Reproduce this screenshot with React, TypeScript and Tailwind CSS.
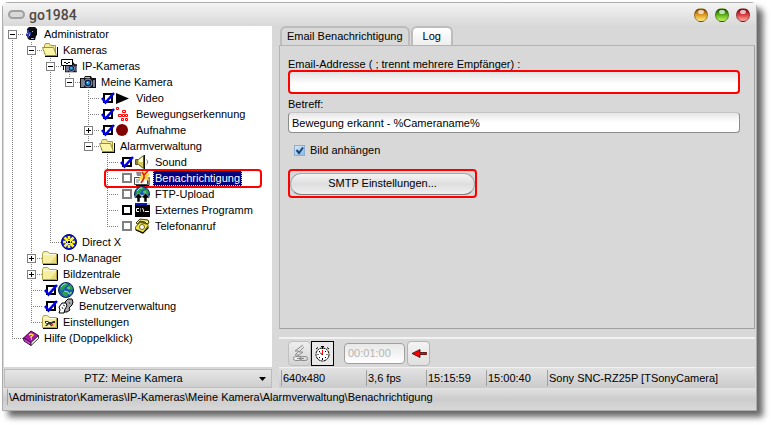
import { useState, type ReactNode } from "react";
import clsx from "clsx";

type Node = {
  label: string;
  icon: keyof typeof icons;
  check?: "on" | "off" | "dim";
  open?: boolean;
  closed?: boolean;
  selected?: boolean;
  children?: Node[];
};

const camera = (
  <>
    <path d="M0 4h4l1-2h6l1 2h4v10H0z" fill="#111" />
    <path d="M1 5h3v8H1zM13 6h2v7h-2z" fill="#7b7f96" />
    <path d="M5 3h5v1H5z" fill="#b9bccb" />
    <circle cx="8" cy="9" r="4.4" fill="#9aa0b8" />
    <circle cx="8" cy="9" r="3.4" fill="#10204c" />
    <circle cx="8" cy="9" r="2" fill="#1e9ad6" />
    <path d="M7 8h1v1H7z" fill="#fff" />
  </>
);

const folder = (
  <>
    <path d="M1 14.500h14.500V4" fill="none" stroke="#000" />
    <path d="M.5 13.500V3.500l1-2h4l2 2h7v10z" fill="#f7efa0" stroke="#b0a448" />
    <path d="M1.500 4.500h12" stroke="#fffde0" />
    <path d="M8 13h6V6z" fill="#e6d87c" />
  </>
);

const openFolder = (
  <>
    <path d="M2.500 12V3.500l1-2h4l1 2h5V12" fill="#f3ea98" stroke="#a89a3c" />
    <path d="M3.500 13.500L.5 5.500h11l3 8z" fill="#fbf5a8" stroke="#9c8f38" />
    <path d="M15.500 14V5M3 14.500h13" stroke="#000" />
  </>
);

const globe = (
  <>
    <circle cx="8" cy="8" r="7.500" fill="#1c5cb0" stroke="#0a2450" />
    <path d="M2 6l3-4 4-1 1 2-3 2-1 2-3 2zM10 4l3-1 2 4-2 1-3-1zM4 10l5-1 2 2-3 4-3-2z" fill="#2ca048" />
    <path d="M3 5l3-3 2 0M9 6l3 0M6 9l4 1 1 2" fill="none" stroke="#8fe0f0" />
    <path d="M12 10l2 0-1 2-2 1z" fill="#7fd070" />
  </>
);

const icons = {
  head: (
    <>
      <path d="M6 1h6l2 2v6l-1 1-1 4H7l-2-1-1-3-1-1 1-1V3z" fill="#0a0a10" />
      <path d="M4 4h2v2h2v3H6v3H5l-1-2H3V8l1-1z" fill="#2c3c98" />
      <path d="M4 7h1v1H4zM6 8h1v2H6zM9 5h1v1H9zM8 12h3v1H8z" fill="#a0b0e8" />
    </>
  ),
  openFolder,
  folder,
  ipCamera: (
    <>
      <g transform="translate(4 3) scale(.8)">{camera}</g>
      <path d="M.5 1.500h11v6H.5z" fill="#fff" stroke="#000" />
      <path d="M1 1h11v1H1zM3 4h2v1H3zM5 5h2v1H5zM7 4h2v1H7zM2 8h1v4H2z" fill="#000" />
    </>
  ),
  camera,
  play: <path d="M1 3l13 5.500L1 14z" fill="#000" />,
  motion: (
    <g fill="#fff" stroke="#f00">
      <path d="M1.500 1.500h2v2h-2zM7.500 4.500h3v2h-3zM3.500 8.500h3v2h-3zM7.500 8.500h2v2h-2zM10.500 8.500h2v2h-2zM6.500 12.500h2v2h-2zM10.500 12.500h2v2h-2z" />
    </g>
  ),
  record: <circle cx="7" cy="8" r="6" fill="#800000" />,
  sound: (
    <>
      <path d="M1.500 5.500h3l5-4v13l-5-4h-3z" fill="#d4ca60" stroke="#5b5620" />
      <path d="M5 6l4-3.500V8H5z" fill="#fffbc8" />
      <path d="M2 6h2v4H2z" fill="#8c8438" />
      <path d="M10.500 1v14" stroke="#111" />
      <path d="M12.500 5.500c1.500 1.500 1.500 3.500 0 5" fill="none" stroke="#888" />
    </>
  ),
  mail: (
    <>
      <path d="M.5 7.500h13v7H.5z" fill="#fff" stroke="#444" />
      <path d="M15 7v8.500H2" fill="none" stroke="#000" />
      <path d="M2 10h4M2 12h3" stroke="#777" />
      <path d="M2 2h5v4H3z" fill="#8c8c8c" />
      <path d="M7 1l2 3 3-4v4l4-1-2 4 1 4-4-2-2 4-1-4-4 0 3-3z" fill="#ffd83a" />
      <path d="M8 2l2 3 4-4M10 5l0 3-3 5" fill="none" stroke="#e01818" strokeWidth="1.500" />
    </>
  ),
  upload: (
    <>
      {globe}
      <path d="M0 12h16v4H0z" fill="#fff" />
      <path d="M4.500 7L9 12H6v4H3v-4H0zM11.500 7L16 12h-3v4h-3v-4H7z" fill="#000" stroke="#fff" strokeWidth=".5" />
    </>
  ),
  terminal: (
    <>
      <path d="M1 1h15v14H1z" fill="#000" />
      <path d="M1 1h15v2H1z" fill="#0018c8" />
      <path d="M13 1h3v2h-3z" fill="#ccc" />
      <path d="M5 6.500H2.500v3H5M6 7h1M6 9h1M8.500 6l1.500 4M11 9.500h4" fill="none" stroke="#fff" />
    </>
  ),
  phone: (
    <>
      <path d="M1 9l5-6 8 2 1 5-6 6-8-4z" fill="#6f6718" />
      <path d="M2 9l4-4 8 2-5 7-7-3z" fill="#f2e649" />
      <path d="M2 5l4-4 8 1 1 3-2 1-2-2-5-1-2 3z" fill="#f7ef7a" stroke="#3c380a" />
      <circle cx="8" cy="9" r="2.500" fill="#fff" stroke="#6b6417" />
      <path d="M2 12l7 3 5-5" fill="none" stroke="#000" />
    </>
  ),
  directx: (
    <>
      <circle cx="8" cy="8" r="7.500" fill="#0a18d0" stroke="#000080" />
      <path d="M3.500 3.500l9 9M12.500 3.500l-9 9M8 2v3M8 11v3M2 8h3M11 8h3" stroke="#fff32c" strokeWidth="2.500" />
      <path d="M6.500 6.500h3v3h-3z" fill="#fff32c" />
      <path d="M7 7h2v2H7z" fill="#000" />
    </>
  ),
  globe,
  users: (
    <>
      <path d="M7 4l3-3h4l1 3-1 3-3 3 1 2-3 2H6z" fill="#a8a8a8" stroke="#000" />
      <path d="M1 9l3-4h4l1 3-2 3-1 4H1l1-3z" fill="#fff" stroke="#000" />
      <path d="M5 7l2 1M4 9l1 2M11 4l1 2" stroke="#444" />
    </>
  ),
  settings: (
    <>
      {folder}
      <path d="M3 7h3l1 1h3l1-1h2v2h-2l-2 2h1l1 1H9l-2-2-2 2H3l2-2-2-1z" fill="#333" />
      <path d="M10 10l1 1" stroke="#d33" />
      <path d="M4 8.500h2" stroke="#fff" />
    </>
  ),
  book: (
    <>
      <path d="M.5 8L8 1l7.500 4.500L8 12.500z" fill="#a818a8" stroke="#4c004c" />
      <path d="M.5 8L8 12.500V15.500L1 11z" fill="#c850c8" stroke="#4c004c" />
      <path d="M8 12.500L15.500 5.500v3L8 15.500z" fill="#fff" stroke="#333" />
      <path d="M6 5l2-1 2 1-2 2v1M8 9h1" fill="none" stroke="#ffe23a" strokeWidth="1.500" />
    </>
  ),
} satisfies Record<string, ReactNode>;

const tree: Node[] = [
  {
    label: "Administrator",
    icon: "head",
    open: true,
    children: [
      {
        label: "Kameras",
        icon: "openFolder",
        open: true,
        children: [
          {
            label: "IP-Kameras",
            icon: "ipCamera",
            open: true,
            children: [
              {
                label: "Meine Kamera",
                icon: "camera",
                open: true,
                children: [
                  { label: "Video", icon: "play", check: "on" },
                  { label: "Bewegungserkennung", icon: "motion", check: "on" },
                  { label: "Aufnahme", icon: "record", check: "on", closed: true },
                  {
                    label: "Alarmverwaltung",
                    icon: "openFolder",
                    open: true,
                    children: [
                      { label: "Sound", icon: "sound", check: "on" },
                      { label: "Benachrichtigung", icon: "mail", check: "dim", selected: true },
                      { label: "FTP-Upload", icon: "upload", check: "dim" },
                      { label: "Externes Programm", icon: "terminal", check: "off" },
                      { label: "Telefonanruf", icon: "phone", check: "dim" },
                    ],
                  },
                ],
              },
            ],
          },
          { label: "Direct X", icon: "directx" },
        ],
      },
      { label: "IO-Manager", icon: "folder", closed: true },
      { label: "Bildzentrale", icon: "folder", closed: true },
      { label: "Webserver", icon: "globe", check: "on" },
      { label: "Benutzerverwaltung", icon: "users", check: "on" },
      { label: "Einstellungen", icon: "settings" },
    ],
  },
  { label: "Hilfe (Doppelklick)", icon: "book" },
];

const dots = { stroke: "#808080", strokeDasharray: "1 1" };

function Guide() {
  return (
    <svg className="h-4 w-[19px] shrink-0" viewBox="0 0 19 16" shapeRendering="crispEdges">
      <path d="M8.500 0v16" {...dots} />
    </svg>
  );
}

function Branch({ node, first, last }: { node: Node; first: boolean; last: boolean }) {
  return (
    <svg className="h-4 w-[19px] shrink-0" viewBox="0 0 19 16" shapeRendering="crispEdges">
      {!first && <path d="M8.500 0v8" {...dots} />}
      {!last && <path d="M8.500 8v8" {...dots} />}
      <path d="M8 8.500h11" {...dots} />
      {(node.open || node.closed) && (
        <>
          <rect x="4.500" y="4.500" width="8" height="8" fill="#fff" stroke="#808080" />
          <path d="M6 8.500h5" stroke="#000" />
          {node.closed && <path d="M8.500 6v5" stroke="#000" />}
        </>
      )}
    </svg>
  );
}

function TreeCheck({ id, node }: { id: string; node: Node }) {
  const [on, setOn] = useState(node.check === "on");
  return (
    <span className="relative flex h-4 w-4 shrink-0 items-center justify-end pr-0.5">
      <input
        id={id}
        type="checkbox"
        checked={on}
        onChange={() => setOn(!on)}
        className={clsx(
          "size-2.5 appearance-none border-2 bg-white",
          node.check === "dim" ? "border-[#808080]" : "border-black",
        )}
      />
      {on && (
        <svg className="pointer-events-none absolute inset-0" viewBox="0 0 16 16">
          <path d="M3 8l3.500 4.500L15 3" fill="none" stroke="#0000f0" strokeWidth="2.500" />
        </svg>
      )}
    </span>
  );
}

function Rows({ nodes, trail = [] }: { nodes: Node[]; trail?: boolean[] }) {
  return nodes.map((node, i) => {
    const last = i === nodes.length - 1;
    const id = `node-${node.icon}-${trail.length}-${i}`;
    return (
      <li key={node.label}>
        <div className="flex h-4 items-center">
          {trail.map((line, n) => (line ? <Guide key={n} /> : <span key={n} className="w-[19px] shrink-0" />))}
          <Branch node={node} first={trail.length === 0 && i === 0} last={last} />
          <div className="relative flex items-center">
            {node.check && <TreeCheck id={id} node={node} />}
            <svg className="mr-[3px] size-4 shrink-0" viewBox="0 0 16 16">
              {icons[node.icon]}
            </svg>
            <label
              htmlFor={node.check ? id : undefined}
              className={clsx(
                "px-0.5 leading-4 whitespace-nowrap",
                node.selected && "bg-[#000080] text-white outline-1 -outline-offset-1 outline-dotted outline-[#e0e040]",
              )}
            >
              {node.label}
            </label>
            {node.selected && (
              <span className="pointer-events-none absolute -top-px -right-5 -bottom-0.5 -left-3.5 rounded border-2 border-[#f00]" />
            )}
          </div>
        </div>
        {node.children && (
          <ul>
            <Rows nodes={node.children} trail={[...trail, !last]} />
          </ul>
        )}
      </li>
    );
  });
}

const orbs = [
  { name: "Minimieren", color: "bg-linear-to-b from-[#8a4a08] via-[#e09a20] to-[#fff080]" },
  { name: "Maximieren", color: "bg-linear-to-b from-[#1c5a08] via-[#5cb414] to-[#c8f860]" },
  { name: "Schließen", color: "bg-linear-to-b from-[#8a0810] via-[#dc3c44] to-[#ffa8a0]" },
];

function TitleBar() {
  return (
    <header className="flex h-[23px] items-center bg-linear-to-b from-[#f4f4f4] to-[#d8d8d8] pr-1.5 pl-[5px]">
      <button aria-label="Fenstermenü" className="mr-1 h-[9px] w-[17px] rounded-full border-2 border-[#a0a0a0] bg-[#d8d8d8]" />
      <h1 className="font-[Roboto,sans-serif] text-sm font-medium text-[#504844]">go1984</h1>
      <div className="ml-auto flex gap-[7px]">
        {orbs.map((orb) => (
          <button
            key={orb.name}
            aria-label={orb.name}
            className={clsx("flex size-3.5 justify-center rounded-full border border-black/30 pt-px", orb.color)}
          >
            <span className="h-1 w-1.5 rounded-full bg-white/70" />
          </button>
        ))}
      </div>
    </header>
  );
}

function EmailForm() {
  return (
    <form className="flex-1 border border-t-[#b4b4b4] border-r-[#a0a0a0] border-b-[#a0a0a0] border-l-[#b4b4b4] pt-3 pr-3.5 pl-2">
      <label htmlFor="email" className="block leading-3">
        Email-Addresse ( ; trennt mehrere Empfänger) :
      </label>
      <input
        id="email"
        className="block h-6 w-full rounded border-2 border-[#f00] bg-linear-to-b from-[#e2e2e2] to-white to-60% px-1"
      />
      <label htmlFor="subject" className="mt-1 block leading-3">
        Betreff:
      </label>
      <input
        id="subject"
        defaultValue="Bewegung erkannt - %Cameraname%"
        className="mt-0.5 block h-[21px] w-full rounded-sm border border-[#8c8c8c] border-t-[#c4c4c4] bg-linear-to-b from-[#e6e6e6] to-white to-50% px-[3px]"
      />
      <label className="mt-[9px] flex h-4 items-center gap-[5px] pl-1.5">
        <span className="relative flex">
          <input
            type="checkbox"
            defaultChecked
            className="peer size-[11px] appearance-none border border-[#8aaed4] bg-linear-to-br from-[#d8e8f8] to-[#8ab8e8]"
          />
          <svg className="pointer-events-none absolute inset-0 hidden peer-checked:block" viewBox="0 0 11 11">
            <path d="M2.500 5l2.500 3 4-5.500" fill="none" stroke="#184878" strokeWidth="2" />
          </svg>
        </span>
        Bild anhängen
      </label>
      <div className="mt-[11px] flex h-[29px] w-[189px] items-center rounded border-2 border-[#f00]">
        <button
          type="button"
          className="h-[22px] w-full rounded-full border border-[#a8a8a8] border-b-[#808080] bg-linear-to-b from-[#f4f4f4] via-[#dedede] to-[#f0f0f0]"
        >
          SMTP Einstellungen...
        </button>
      </div>
    </form>
  );
}

function Toolbar() {
  return (
    <div className="mt-2 flex h-[31px] items-center border-t-2 border-b border-[#f2f2f2] pl-[9px]">
      <button
        aria-label="Verbindung"
        disabled
        className="grid h-[25px] w-[23px] place-items-center rounded-sm border border-[#c0c0c0] bg-linear-to-b from-[#eee] to-[#d4d4d4]"
      >
        <svg className="size-[18px]" viewBox="0 0 18 18" fill="none" stroke="#8c8c8c">
          <path d="M12 1L4 7h4l-4 4h4M13 3L8 8h4l-5 4" />
          <rect x="2.500" y="12.500" width="8" height="4" rx="2" fill="#eee" />
          <rect x="8.500" y="12.500" width="8" height="4" rx="2" />
          <path d="M6 14.500h7" />
        </svg>
      </button>
      <button aria-label="Timer" className="grid h-[25px] w-[23px] place-items-center border border-black bg-[#e8e8e8]">
        <svg className="size-[17px]" viewBox="0 0 17 17" fill="none" stroke="#000">
          <circle cx="8.500" cy="9.500" r="6.500" fill="#fff" strokeDasharray="2.500 .5" />
          <path d="M7 1.500h3M8.500 1v3M2 4l2-1.500M15 4l-2-1.500M8.500 13v2M3.500 9.500h1M12.500 9.500h1M5 6l1 1M12 6l-1 1M5 13l1-1M12 13l-1-1" />
          <path d="M8.500 10V5" stroke="#f00" />
          <path d="M6 7.500l2.500 2.500" />
        </svg>
      </button>
      <input
        aria-label="Dauer"
        disabled
        defaultValue="00:01:00"
        className="ml-2.5 h-[21px] w-[61px] rounded-sm border border-[#a0a0a0] bg-linear-to-b from-[#e8e8e8] to-white px-[3px] text-[#b4b4b4]"
      />
      <button
        aria-label="Zurück"
        className="ml-0.5 grid h-[25px] w-[23px] place-items-center rounded-sm border border-[#b4b4b4] bg-linear-to-b from-[#f4f4f4] to-[#e0e0e0]"
      >
        <svg className="h-[9px] w-4" viewBox="0 0 16 9">
          <path d="M1 4.500L9 .5v3h6.500v2H9v3z" fill="#f00" stroke="#400" strokeWidth=".8" />
        </svg>
      </button>
    </div>
  );
}

const status = [
  { text: "640x480", width: "w-[85px]" },
  { text: "3,6 fps", width: "w-[60px]" },
  { text: "15:15:59", width: "w-[60px]" },
  { text: "15:00:40", width: "w-[61px]" },
  { text: "Sony SNC-RZ25P [TSonyCamera]", width: "flex-1" },
];

export default function App() {
  return (
    <div className="flex min-h-screen bg-white pt-0.5 pr-3.5 pb-3.5 pl-0.5 font-['Liberation_Sans',Arial,sans-serif] text-[11px] text-black">
      <div className="flex flex-1 flex-col rounded-t-md border border-[#acacac] bg-[#d8d8d8] shadow-[6px_6px_6px_rgba(0,0,0,0.6)]">
        <TitleBar />

        <div className="flex flex-1">
          <aside className="flex w-[269px] shrink-0 flex-col pl-px">
            <ul className="flex-1 bg-white">
              <Rows nodes={tree} />
            </ul>
            <button className="mt-0.5 flex h-[19px] items-center border border-[#bcbcbc] bg-linear-to-b from-[#e6e6e6] to-[#cfcfcf] pr-1 pl-1">
              <span className="flex-1">PTZ: Meine Kamera</span>
              <svg className="h-1 w-[9px]" viewBox="0 0 9 4">
                <path d="M1 0h7L4.500 4z" />
              </svg>
            </button>
          </aside>

          <main className="flex min-w-0 flex-1 flex-col pr-px pl-[7px]">
            <div role="tablist" className="flex h-[19px] items-end gap-px pl-px">
              <button
                role="tab"
                aria-selected="true"
                className="h-[19px] rounded-t-md border-2 border-b-0 border-[#bcbcbc] bg-[#d8d8d8] px-[5px]"
              >
                Email Benachrichtigung
              </button>
              <button
                role="tab"
                aria-selected="false"
                className="h-[19px] rounded-t-md border-2 border-b-0 border-[#bcbcbc] bg-linear-to-b from-white to-[#eee] px-2.5"
              >
                Log
              </button>
            </div>
            <EmailForm />
            <Toolbar />
            <div className="flex h-5 items-center bg-linear-to-b from-[#e2e2e2] to-[#cbcbcb] pl-0.5">
              {status.map((item) => (
                <span key={item.text} className={clsx("border-l border-[#a0a0a0] pl-px leading-4", item.width)}>
                  {item.text}
                </span>
              ))}
            </div>
          </main>
        </div>

        <footer className="flex h-[22px] items-center bg-linear-to-b from-[#e2e2e2] via-[#cccccc] to-[#d8d8d8] pb-1 pl-1">
          <span className="border-l border-[#a0a0a0] pl-px leading-4">
            \Administrator\Kameras\IP-Kameras\Meine Kamera\Alarmverwaltung\Benachrichtigung
          </span>
        </footer>
      </div>
    </div>
  );
}
